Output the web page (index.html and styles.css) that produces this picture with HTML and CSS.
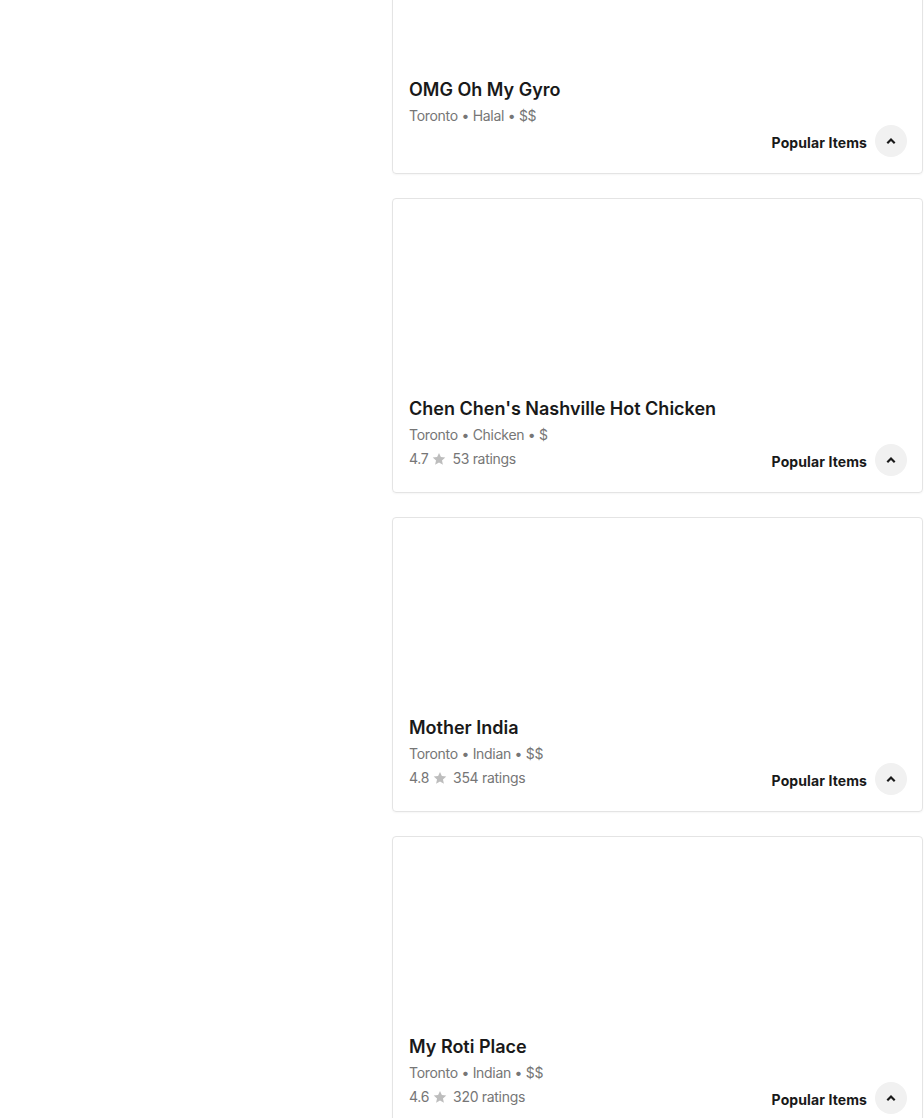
FILE: index.html
```html
<!DOCTYPE html>
<html>
<head>
    <meta charset="UTF-8">
    <title>Stores</title>
    <link rel="stylesheet" href="styles.css">
</head>
<body>
    <div class="page">
        <aside class="sidebar"></aside>

        <main class="store-list">
            <div class="store-card">
                <div class="store-media"></div>
                <div class="store-body">
                    <div class="store-info">
                        <div class="store-name">OMG Oh My Gyro</div>
                        <div class="store-meta">Toronto • Halal • $$</div>
                    </div>
                    <div class="popular">
                        <span class="popular-label">Popular Items</span>
                        <button class="toggle" aria-label="Collapse">
                            <svg width="12" height="12" viewBox="0 0 12 12"><path d="M2.3 8.2 L6 4.5 L9.7 8.2" fill="none" stroke="#191919" stroke-width="2.2"/></svg>
                        </button>
                    </div>
                </div>
            </div>

            <div class="store-card">
                <div class="store-media"></div>
                <div class="store-body">
                    <div class="store-info">
                        <div class="store-name">Chen Chen's Nashville Hot Chicken</div>
                        <div class="store-meta">Toronto • Chicken • $</div>
                        <div class="store-rating">
                            <span>4.7</span>
                            <svg class="star" width="14" height="14" viewBox="0 0 24 24"><path d="M12 1.5l3.2 7 7.6.8-5.7 5.1 1.6 7.5L12 18.1l-6.7 3.8 1.6-7.5L1.2 9.3l7.6-.8z" fill="#bdbdbd"/></svg>
                            <span>53 ratings</span>
                        </div>
                    </div>
                    <div class="popular">
                        <span class="popular-label">Popular Items</span>
                        <button class="toggle" aria-label="Collapse">
                            <svg width="12" height="12" viewBox="0 0 12 12"><path d="M2.3 8.2 L6 4.5 L9.7 8.2" fill="none" stroke="#191919" stroke-width="2.2"/></svg>
                        </button>
                    </div>
                </div>
            </div>

            <div class="store-card">
                <div class="store-media"></div>
                <div class="store-body">
                    <div class="store-info">
                        <div class="store-name">Mother India</div>
                        <div class="store-meta">Toronto • Indian • $$</div>
                        <div class="store-rating">
                            <span>4.8</span>
                            <svg class="star" width="14" height="14" viewBox="0 0 24 24"><path d="M12 1.5l3.2 7 7.6.8-5.7 5.1 1.6 7.5L12 18.1l-6.7 3.8 1.6-7.5L1.2 9.3l7.6-.8z" fill="#bdbdbd"/></svg>
                            <span>354 ratings</span>
                        </div>
                    </div>
                    <div class="popular">
                        <span class="popular-label">Popular Items</span>
                        <button class="toggle" aria-label="Collapse">
                            <svg width="12" height="12" viewBox="0 0 12 12"><path d="M2.3 8.2 L6 4.5 L9.7 8.2" fill="none" stroke="#191919" stroke-width="2.2"/></svg>
                        </button>
                    </div>
                </div>
            </div>

            <div class="store-card">
                <div class="store-media"></div>
                <div class="store-body">
                    <div class="store-info">
                        <div class="store-name">My Roti Place</div>
                        <div class="store-meta">Toronto • Indian • $$</div>
                        <div class="store-rating">
                            <span>4.6</span>
                            <svg class="star" width="14" height="14" viewBox="0 0 24 24"><path d="M12 1.5l3.2 7 7.6.8-5.7 5.1 1.6 7.5L12 18.1l-6.7 3.8 1.6-7.5L1.2 9.3l7.6-.8z" fill="#bdbdbd"/></svg>
                            <span>320 ratings</span>
                        </div>
                    </div>
                    <div class="popular">
                        <span class="popular-label">Popular Items</span>
                        <button class="toggle" aria-label="Collapse">
                            <svg width="12" height="12" viewBox="0 0 12 12"><path d="M2.3 8.2 L6 4.5 L9.7 8.2" fill="none" stroke="#191919" stroke-width="2.2"/></svg>
                        </button>
                    </div>
                </div>
            </div>
        </main>
    </div>
</body>
</html>
```

FILE: styles.css
```css
body {
    font-family: Inter, 'Liberation Sans', sans-serif;
    margin: 0;
    background-color: white;
    color: #191919;
    overflow: hidden;
}
.page {
    display: flex;
    margin-top: -121px;
}
.sidebar {
    width: 392px;
    flex-shrink: 0;
}
.store-list {
    width: 531px;
    display: flex;
    flex-direction: column;
    gap: 24px;
}
.store-card {
    box-sizing: border-box;
    height: 295px;
    border: 1px solid #e4e4e4;
    border-radius: 4px;
    box-shadow: 0 1px 2px rgba(0,0,0,0.04);
    display: flex;
    flex-direction: column;
}
.store-media {
    height: 182px;
}
.store-body {
    flex: 1;
    display: flex;
    justify-content: space-between;
    padding: 16px 15px 16px 16px;
}
.store-name {
    font-size: 18px;
    font-weight: 600;
    line-height: 24px;
    margin-bottom: 4px;
}
.store-meta {
    font-size: 14px;
    line-height: 20px;
    letter-spacing: -0.3px;
    color: #767676;
}
.store-rating {
    display: flex;
    align-items: center;
    margin-top: 4px;
    font-size: 14px;
    line-height: 20px;
    letter-spacing: -0.3px;
    color: #767676;
}
.star {
    margin: 0 6px 0 4px;
}
.popular {
    align-self: flex-end;
    display: flex;
    align-items: center;
    gap: 8px;
}
.popular-label {
    font-size: 14px;
    font-weight: 700;
    letter-spacing: 0.1px;
    padding-top: 3px;
}
.toggle {
    width: 32px;
    height: 32px;
    border: none;
    border-radius: 50%;
    background-color: #f1f1f1;
    display: flex;
    align-items: center;
    justify-content: center;
    padding: 0;
    cursor: pointer;
}
```
